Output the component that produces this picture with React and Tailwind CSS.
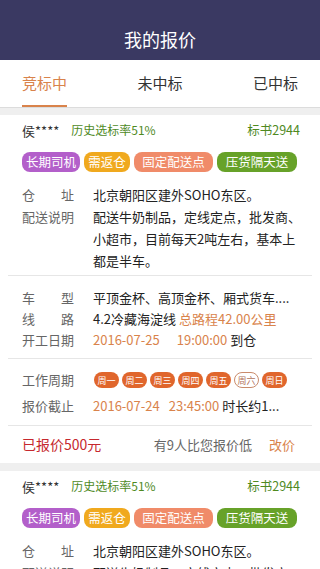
import React from "react";

const tags = [
  { text: "长期司机", cls: "w-[58px] bg-[#b35fca]" },
  { text: "需返仓", cls: "w-[46px] bg-[#f0a91e]" },
  { text: "固定配送点", cls: "w-[79px] bg-[#f08b69]" },
  { text: "压货隔天送", cls: "w-[80px] bg-[#67a229]" },
];

const week = ["周一", "周二", "周三", "周四", "周五", "周六", "周日"];

function Label({ chars }) {
  // labels are justified to the width of four characters
  return (
    <div className="flex w-[52px] shrink-0 justify-between text-[#666]">
      {chars.map((c, i) => (
        <span key={i}>{c}</span>
      ))}
    </div>
  );
}

function Divider() {
  return <div className="mx-2 h-px bg-[#e6e6e6]" />;
}

function QuoteCard() {
  return (
    <div className="bg-white">
      <div className="pl-[22px] pr-[20px]">
        <div className="flex h-[27px] items-end justify-between pb-[2px]">
          <div className="flex items-center">
            <span className="text-[13px] text-[#333]">侯****</span>
            <span className="ml-[12px] text-[12px] text-[#4f8a1f]">历史选标率51%</span>
          </div>
          <span className="text-[12.5px] text-[#4f8a1f]">标书2944</span>
        </div>
        <div className="mt-[10px] flex gap-[4px]">
          {tags.map((t) => (
            <span
              key={t.text}
              className={`flex h-[20px] items-center justify-center rounded-[8px] text-[12.5px] text-white ${t.cls}`}
            >
              {t.text}
            </span>
          ))}
        </div>
        <div className="-mr-[8px] mt-[12px] pb-[3px] text-[13px] leading-[22px]">
          <div className="flex gap-[19px]">
            <Label chars={["仓", "址"]} />
            <span className="text-[#222]">北京朝阳区建外SOHO东区。</span>
          </div>
          <div className="flex gap-[19px]">
            <div className="w-[52px] shrink-0 text-[#666]">配送说明</div>
            <span className="text-[#222]">
              配送牛奶制品，定线定点，批发商、小超市，目前每天2吨左右，基本上都是半车。
            </span>
          </div>
        </div>
      </div>
      <Divider />
      <div className="pl-[22px] pr-[20px] pt-[11px] pb-[8px] text-[13px] leading-[21px]">
        <div className="flex gap-[19px]">
          <Label chars={["车", "型"]} />
          <span className="text-[#222]">平顶金杯、高顶金杯、厢式货车....</span>
        </div>
        <div className="flex gap-[19px]">
          <Label chars={["线", "路"]} />
          <span className="text-[#222]">
            4.2冷藏海淀线 <span className="text-[#d9834b]">总路程42.00公里</span>
          </span>
        </div>
        <div className="flex gap-[19px]">
          <div className="w-[52px] shrink-0 text-[#666]">开工日期</div>
          <span className="whitespace-nowrap text-[#222]">
            <span className="text-[#d9834b]">2016-07-25</span>
            <span className="ml-[17px] text-[#d9834b]">19:00:00</span> 到仓
          </span>
        </div>
      </div>
      <Divider />
      <div className="pl-[22px] pr-[20px] pt-[9px] pb-[7px] text-[13px]">
        <div className="flex h-[24px] items-center gap-[20px]">
          <div className="w-[52px] shrink-0 text-[#666]">工作周期</div>
          <div className="flex gap-[3px]">
            {week.map((d) =>
              d === "周六" ? (
                <span
                  key={d}
                  className="flex h-[16px] w-[25px] items-center justify-center rounded-full border border-[#c98b6c] bg-white text-[9px] leading-none text-[#b0725a]"
                >
                  {d}
                </span>
              ) : (
                <span
                  key={d}
                  className="flex h-[16px] w-[25px] items-center justify-center rounded-full bg-[#e0662c] text-[9px] leading-none text-white"
                >
                  {d}
                </span>
              )
            )}
          </div>
        </div>
        <div className="mt-[2px] flex h-[24px] items-center gap-[19px]">
          <div className="w-[52px] shrink-0 text-[#666]">报价截止</div>
          <span className="whitespace-nowrap text-[#222]">
            <span className="text-[#d9834b]">2016-07-24</span>
            <span className="ml-[9px] text-[#d9834b]">23:45:00</span> 时长约1...
          </span>
        </div>
      </div>
      <Divider />
      <div className="flex h-[37px] items-center pl-[22px] pr-[25px] text-[13px]">
        <span className="text-[14px] text-[#c6282e]">已报价500元</span>
        <span className="ml-auto text-[#666]">有9人比您报价低</span>
        <span className="ml-[17px] text-[#d9834b]">改价</span>
      </div>
    </div>
  );
}

export default function App() {
  return (
    <div className="h-[569px] w-[320px] overflow-hidden bg-[#efefef] font-['Noto_Sans_CJK_SC','Noto_Sans',sans-serif]">
      <div className="flex h-[60px] items-center justify-center bg-[#3a3962] pt-[18px]">
        <span className="text-[18px] text-white">我的报价</span>
      </div>
      <div className="flex h-[48px] justify-between border-b border-[#dcdcdc] bg-white px-[22px] text-[15px]">
        <div className="relative flex items-center text-[#d9834b]">
          竞标中
          <div className="absolute bottom-0 left-0 h-[2px] w-full bg-[#d9834b]" />
        </div>
        <div className="flex items-center text-[#333]">未中标</div>
        <div className="flex items-center text-[#333]">已中标</div>
      </div>
      <div className="mt-[7px]">
        <QuoteCard />
      </div>
      <div className="mt-[8px]">
        <QuoteCard />
      </div>
    </div>
  );
}
